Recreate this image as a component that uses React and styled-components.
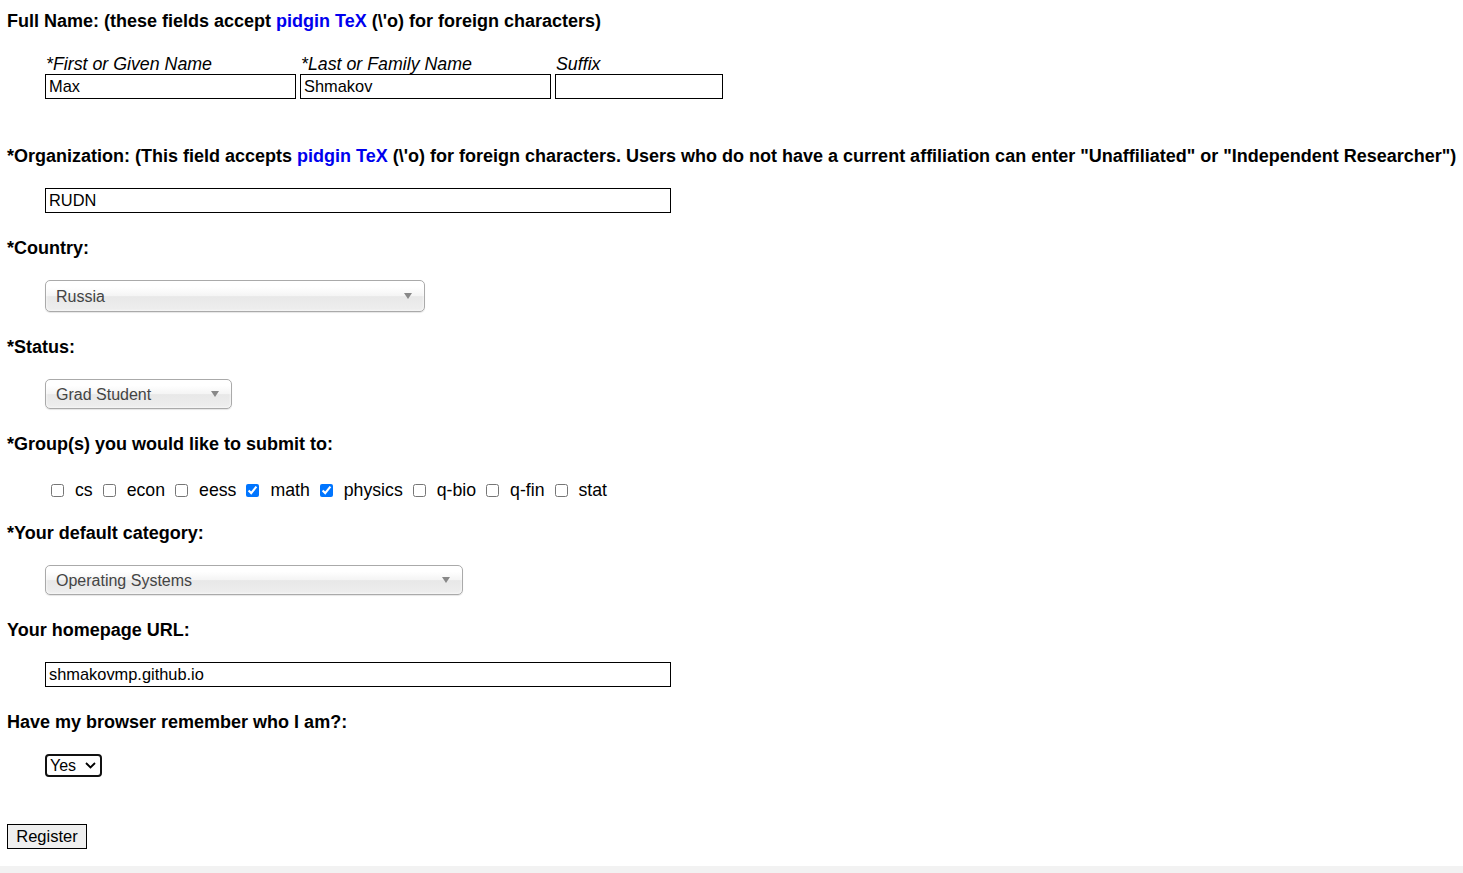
import React from 'react';
import styled, { createGlobalStyle } from 'styled-components';

const Global = createGlobalStyle`
  html, body { margin: 0; padding: 0; background: #fff; }
  body {
    font-family: "Liberation Sans", Arial, sans-serif;
    color: #000;
  }
`;

const Page = styled.form`
  min-height: 873px;
  display: flex;
  flex-direction: column;
`;

const Body = styled.div`
  flex: 1;
  padding: 11px 7px 0;
`;

const Heading = styled.div`
  font-size: 18px;
  font-weight: bold;
  line-height: 20px;
  white-space: nowrap;
`;

const TexLink = styled.a`
  color: #0000ee;
  text-decoration: none;
`;

const Section = styled.div`
  margin-top: ${p => p.$gap || 25}px;
`;

const Field = styled.div`
  margin: 22px 0 0 38px;
`;

const NameGrid = styled.div`
  display: grid;
  grid-template-columns: 251px 251px 168px;
  column-gap: 4px;
  margin: 23px 0 0 38px;
`;

const SubLabel = styled.span`
  font-size: 17.8px;
  font-style: italic;
  line-height: 20px;
  padding-left: 1px;
`;

const TextInput = styled.input`
  box-sizing: border-box;
  width: ${p => p.$w || 251}px;
  height: 25px;
  border: 1px solid #000;
  padding: 0 3px;
  font-family: "Liberation Sans", Arial, sans-serif;
  font-size: 16.4px;
  color: #000;
  outline: none;
`;

const FancyWrap = styled.span`
  position: relative;
  display: inline-block;
  &::after {
    content: '';
    position: absolute;
    right: 13px;
    top: 50%;
    margin-top: -3px;
    border-left: 4px solid transparent;
    border-right: 4px solid transparent;
    border-top: 6px solid #888;
    pointer-events: none;
  }
`;

const FancySelect = styled.select`
  appearance: none;
  box-sizing: border-box;
  display: block;
  width: ${p => p.$w}px;
  height: ${p => p.$h || 31}px;
  border: 1px solid #aaa;
  border-radius: 5px;
  padding: 0 10px;
  background: linear-gradient(#ffffff 20%, #f4f4f4 50%, #e8e8e8 52%, #eeeeee 100%);
  box-shadow: 0 0 3px #fff inset, 0 1px 1px rgba(0, 0, 0, 0.1);
  font-family: "Liberation Sans", Arial, sans-serif;
  font-size: 16px;
  color: #444;
  outline: none;
`;

const Checks = styled.div`
  margin: 25px 0 0 38px;
  font-size: 17.7px;
  line-height: 22px;
  display: flex;
  align-items: center;
`;

const CheckItem = styled.label`
  display: inline-flex;
  align-items: center;
  margin-right: 4px;
  input {
    width: 13px;
    height: 13px;
    margin: 0 11px 0 6px;
    accent-color: #0075ff;
  }
`;

const SmallWrap = styled.span`
  position: relative;
  display: inline-block;
  svg {
    position: absolute;
    right: 6px;
    top: 8px;
    pointer-events: none;
  }
`;

const SmallSelect = styled.select`
  appearance: none;
  box-sizing: border-box;
  width: 57px;
  height: 23px;
  border: 2px solid #111;
  border-radius: 4px;
  padding: 0 0 0 3px;
  background: #fff;
  font-family: "Liberation Sans", Arial, sans-serif;
  font-size: 16px;
  color: #000;
  outline: none;
`;

const Button = styled.button`
  margin-top: 47px;
  box-sizing: border-box;
  width: 80px;
  height: 25px;
  border: 1px solid #000;
  background: #efefef;
  font-family: "Liberation Sans", Arial, sans-serif;
  font-size: 16.5px;
  color: #000;
  padding: 0;
`;

const Footer = styled.div`
  height: 7px;
  background: #f2f2f2;
`;

const groups = [
  ['cs', false], ['econ', false], ['eess', false], ['math', true],
  ['physics', true], ['q-bio', false], ['q-fin', false], ['stat', false],
];

const Tex = () => <TexLink href="#">pidgin TeX</TexLink>;

export default function App() {
  return (
    <Page onSubmit={e => e.preventDefault()}>
      <Global />
      <Body>
        <Heading>Full Name: (these fields accept <Tex /> (\'o) for foreign characters)</Heading>
        <NameGrid>
          <SubLabel>*First or Given Name</SubLabel>
          <SubLabel>*Last or Family Name</SubLabel>
          <SubLabel>Suffix</SubLabel>
          <TextInput defaultValue="Max" />
          <TextInput defaultValue="Shmakov" />
          <TextInput $w={168} defaultValue="" />
        </NameGrid>

        <Section $gap={47}>
          <Heading>*Organization: (This field accepts <Tex /> (\'o) for foreign characters. Users who do not have a current affiliation can enter "Unaffiliated" or "Independent Researcher")</Heading>
          <Field><TextInput $w={626} defaultValue="RUDN" /></Field>
        </Section>

        <Section>
          <Heading>*Country:</Heading>
          <Field>
            <FancyWrap>
              <FancySelect $w={380} $h={32} defaultValue="Russia">
                <option>Russia</option>
              </FancySelect>
            </FancyWrap>
          </Field>
        </Section>

        <Section>
          <Heading>*Status:</Heading>
          <Field>
            <FancyWrap>
              <FancySelect $w={187} $h={30} defaultValue="Grad Student">
                <option>Grad Student</option>
              </FancySelect>
            </FancyWrap>
          </Field>
        </Section>

        <Section>
          <Heading>*Group(s) you would like to submit to:</Heading>
          <Checks>
            {groups.map(([name, on]) => (
              <CheckItem key={name}>
                <input type="checkbox" defaultChecked={on} />
                {name}
              </CheckItem>
            ))}
          </Checks>
        </Section>

        <Section $gap={22}>
          <Heading>*Your default category:</Heading>
          <Field>
            <FancyWrap>
              <FancySelect $w={418} $h={30} defaultValue="Operating Systems">
                <option>Operating Systems</option>
              </FancySelect>
            </FancyWrap>
          </Field>
        </Section>

        <Section>
          <Heading>Your homepage URL:</Heading>
          <Field><TextInput $w={626} defaultValue="shmakovmp.github.io" /></Field>
        </Section>

        <Section>
          <Heading>Have my browser remember who I am?:</Heading>
          <Field>
            <SmallWrap>
              <SmallSelect defaultValue="Yes">
                <option>Yes</option>
                <option>No</option>
              </SmallSelect>
              <svg width="11" height="7" viewBox="0 0 11 7">
                <path d="M1 1l4.5 4.5L10 1" fill="none" stroke="#000" strokeWidth="1.8" />
              </svg>
            </SmallWrap>
          </Field>
        </Section>

        <Button type="submit">Register</Button>
      </Body>
      <Footer />
    </Page>
  );
}
